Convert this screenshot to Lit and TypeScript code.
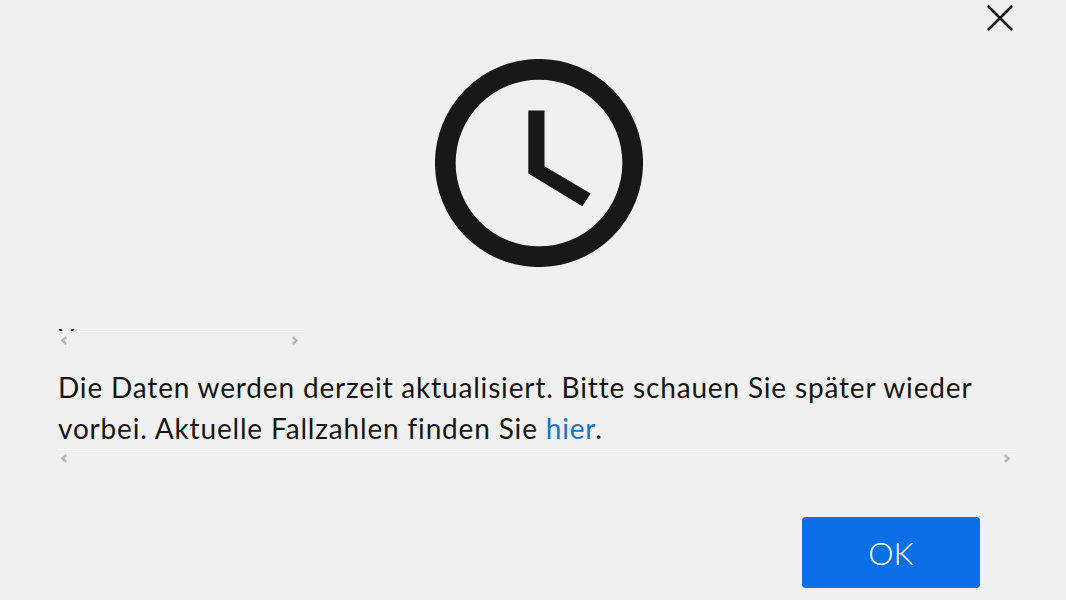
import { LitElement, html, css } from 'lit';
import { customElement } from 'lit/decorators.js';

const chevron = (flip: boolean) => html`<svg
  class="chevron"
  width="8"
  height="9"
  viewBox="0 0 8 9"
  style=${flip ? 'transform: scaleX(-1)' : ''}
>
  <path d="M6.2 1 L2.4 4.5 L6.2 8" fill="none" stroke="#b8b8b8" stroke-width="2.4" />
</svg>`;

@customElement('scroll-strip')
class ScrollStrip extends LitElement {
  static styles = css`
    :host {
      display: block;
    }

    .track {
      border-top: 1px solid #fff;
    }

    .arrows {
      display: flex;
      justify-content: space-between;
      padding: 4px 5px 0 2px;
      height: 10px;
    }

    svg {
      display: block;
    }
  `;

  render() {
    return html`<div class="track"></div>
      <div class="arrows">${chevron(false)}${chevron(true)}</div>`;
  }
}

@customElement('app-root')
class AppRoot extends LitElement {
  static styles = css`
    :host {
      display: block;
      height: 600px;
      overflow: hidden;
      background: #f0f0f0;
      color: #151515;
      font-family: Lato, 'Noto Sans', sans-serif;
    }

    .dialog {
      display: flex;
      flex-direction: column;
      padding: 5px 50px 0 58px;
    }

    .top {
      display: flex;
      justify-content: flex-end;
      height: 26px;
      padding-right: 3px;
    }

    .close {
      display: block;
      border: 0;
      padding: 0;
      background: none;
      cursor: pointer;
    }

    .close svg,
    .clock {
      display: block;
    }

    .clock {
      margin: 28px 0 0 377px;
    }

    .clipped {
      height: 2px;
      margin-top: 62px;
      overflow: hidden;
      font-size: 27px;
      line-height: 2px;
    }

    .clipped span {
      display: block;
      padding-top: 8px;
    }

    .first {
      width: 246px;
    }

    p {
      margin: 21px 0 0;
      max-width: 930px;
      font-size: 28px;
      line-height: 41px;
      letter-spacing: 0.83px;
      color: #151515;
    }

    a {
      color: #1a73c8;
      text-decoration: none;
    }

    .actions {
      display: flex;
      justify-content: flex-end;
      margin-top: 53px;
      padding-right: 36px;
    }

    .ok {
      width: 178px;
      height: 71px;
      border: 0;
      border-radius: 4px;
      background: #0a6ee6;
      color: #fff;
      font: 300 32px Lato, 'Noto Sans', sans-serif;
      cursor: pointer;
    }
  `;

  render() {
    return html`<div class="dialog">
      <div class="top">
        <button class="close" type="button" aria-label="Schließen">
          <svg width="26" height="26" viewBox="0 0 26 26">
            <path d="M1 1 L25 25 M25 1 L1 25" stroke="#151515" stroke-width="2.5" fill="none" />
          </svg>
        </button>
      </div>
      <svg class="clock" width="208" height="208" viewBox="0 0 208 208">
        <circle cx="104" cy="104" r="93.7" fill="none" stroke="#181818" stroke-width="20.7" />
        <path
          d="M93.3 51.5 H109.5 V107.2 L155.7 134.5 L147.3 147.2 L93.3 114.5 Z"
          fill="#181818"
        />
      </svg>
      <div class="clipped"><span>Y</span></div>
      <scroll-strip class="first"></scroll-strip>
      <p>
        Die Daten werden derzeit aktualisiert. Bitte schauen Sie später wieder
        vorbei. Aktuelle Fallzahlen finden Sie <a href="#">hier</a>.
      </p>
      <scroll-strip class="second"></scroll-strip>
      <div class="actions">
        <button class="ok" type="button">OK</button>
      </div>
    </div>`;
  }
}
